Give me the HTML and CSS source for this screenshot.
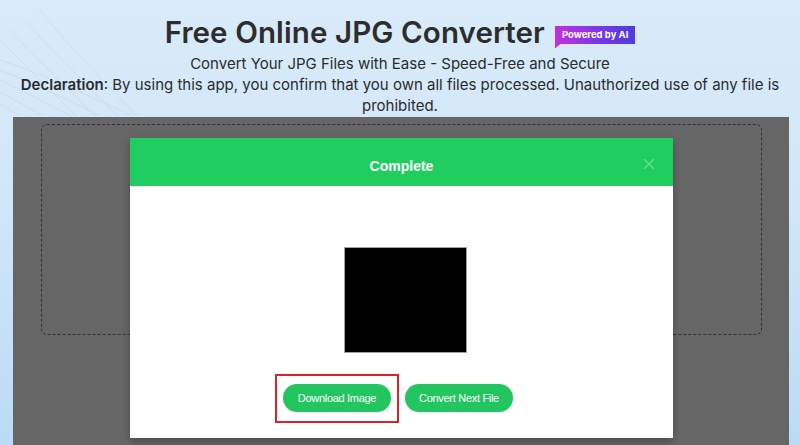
FILE: index.html
```html
<!DOCTYPE html>
<html lang="en">
<head>
<meta charset="utf-8">
<title>Free Online JPG Converter</title>
<link rel="stylesheet" href="styles.css">
</head>
<body>
<svg class="waves" width="260" height="445" viewBox="0 0 260 445" aria-hidden="true">
  <g fill="none" stroke="#a7c6e4" stroke-width="0.7" opacity="0.4">
    <path d="M0 60 C60 80 120 110 200 150"/>
    <path d="M0 70 C55 92 115 122 190 165"/>
    <path d="M0 80 C50 104 105 134 180 180"/>
    <path d="M0 92 C45 116 95 146 170 195"/>
    <path d="M0 104 C40 128 85 158 160 210"/>
    <path d="M0 40 C30 70 60 100 110 150"/>
    <path d="M10 30 C40 62 75 96 130 150"/>
    <path d="M25 20 C55 55 95 92 150 150"/>
    <path d="M40 10 C70 48 110 88 170 150"/>
  </g>
</svg>
<header class="hero">
  <h1 class="title"><span class="title-text">Free Online JPG Converter</span><span class="badge">Powered by AI</span></h1>
  <p class="sub">Convert Your JPG Files with Ease - Speed-Free and Secure</p>
  <p class="decl"><strong>Declaration</strong>: By using this app, you confirm that you own all files processed. Unauthorized use of any file is prohibited.</p>
</header>
<main class="stage">
  <div class="drop"></div>
  <section class="modal">
    <div class="modal-head">
      <h2 class="modal-title">Complete</h2>
      <svg class="close" width="12" height="12" viewBox="0 0 12 12" aria-hidden="true">
        <path d="M1 1 L11 11 M11 1 L1 11" stroke="rgba(255,255,255,0.35)" stroke-width="1.2" fill="none"/>
      </svg>
    </div>
    <div class="modal-body">
      <div class="preview"></div>
      <div class="actions">
        <button class="btn">Download Image</button>
        <button class="btn">Convert Next File</button>
      </div>
    </div>
    <div class="highlight"></div>
  </section>
</main>
</body>
</html>
```

FILE: styles.css
```css
* { box-sizing: border-box; }
html, body { margin: 0; padding: 0; }
body {
  width: 800px;
  height: 445px;
  overflow: hidden;
  position: relative;
  font-family: Inter, "Open Sans", "Liberation Sans", sans-serif;
  color: #2b2b2b;
  background: linear-gradient(180deg, #d9ebfa 0%, #d1e6f9 45%, #bcdaf5 100%);
}
.waves {
  position: absolute;
  left: 0;
  top: 0;
  z-index: 0;
}
.hero {
  position: relative;
  z-index: 1;
  padding-top: 12px;
  text-align: center;
}
.title {
  margin: 0;
  display: flex;
  justify-content: center;
  align-items: center;
  gap: 10px;
  height: 40px;
  font-size: 29.5px;
  font-weight: 600;
  color: #2d2d2d;
  letter-spacing: 0.1px;
}
.badge {
  position: relative;
  display: inline-block;
  margin-top: 5px;
  padding: 0 7px;
  height: 18px;
  line-height: 18px;
  font-size: 9.5px;
  font-weight: 700;
  color: #fff;
  letter-spacing: 0;
  background: linear-gradient(90deg, #c32fe2 0%, #7b38e4 55%, #4b3ce0 100%);
}
.badge::after {
  content: "";
  position: absolute;
  left: 0;
  bottom: -5px;
  width: 6px;
  height: 5px;
  background: #c32fe2;
  clip-path: polygon(0 0, 100% 0, 0 100%);
}
.sub, .decl {
  margin: 0;
  font-size: 15px;
  line-height: 21px;
  color: #2b2b2b;
}
.sub { margin-top: 1px; }
.decl { padding: 0 16px; }
.decl strong { font-weight: 600; }
.stage {
  position: relative;
  z-index: 1;
  margin: 1px 11px 0 13px;
  height: 328px;
  background: #666666;
  padding: 7px 27px 0 28px;
}
.drop {
  height: 211px;
  border: 1.5px dashed #333333;
  border-radius: 6px;
}
.modal {
  position: absolute;
  left: 117px;
  top: 21px;
  width: 543px;
  height: 300px;
  background: #fff;
  box-shadow: 0 4px 8px rgba(0,0,0,0.25);
}
.modal-head {
  position: relative;
  height: 48px;
  padding-top: 8px;
  background: #1fce5f;
  display: flex;
  align-items: center;
  justify-content: center;
}
.modal-title {
  margin: 0;
  font-family: "Liberation Sans", Arial, sans-serif;
  font-size: 14px;
  font-weight: 700;
  color: #fff;
}
.close {
  position: absolute;
  right: 18px;
  top: 20px;
}
.modal-body {
  display: flex;
  flex-direction: column;
  align-items: center;
  padding-top: 61px;
}
.preview {
  width: 123px;
  height: 106px;
  background: #000;
  border: 1px solid #a0a0a0;
  margin-left: 8px;
}
.actions {
  display: flex;
  gap: 14px;
  margin-top: 31px;
  margin-right: 7px;
}
.btn {
  width: 108px;
  height: 28px;
  border: 0;
  border-radius: 14px;
  background: #22c55e;
  color: #fff;
  font-family: "Liberation Sans", Arial, sans-serif;
  font-size: 11px;
  letter-spacing: -0.3px;
  box-shadow: 0 0 3px rgba(0,0,0,0.08);
  padding: 0;
}
.highlight {
  position: absolute;
  left: 145px;
  top: 236px;
  width: 124px;
  height: 49px;
  border: 2.5px solid #d9232b;
}
```
